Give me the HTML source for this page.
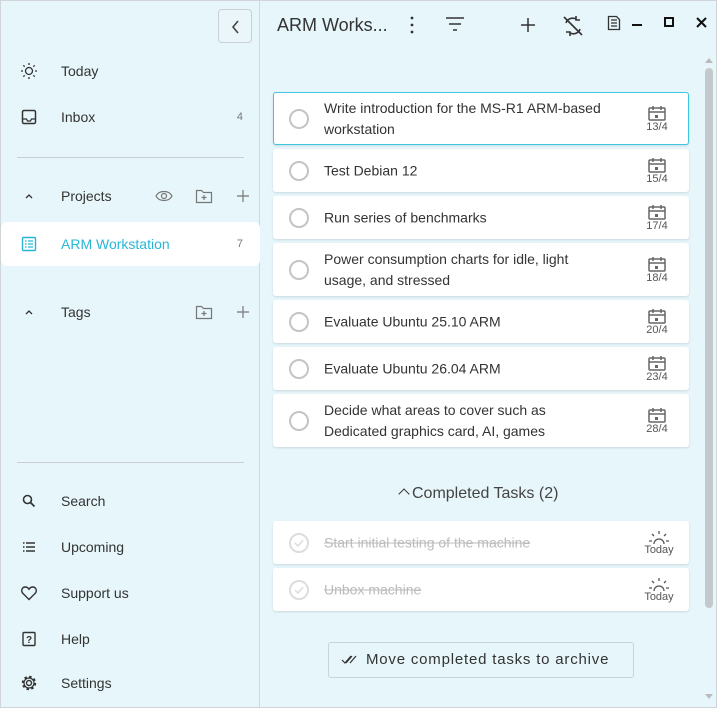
<!DOCTYPE html>
<html><head><meta charset="utf-8"><style>
*{box-sizing:border-box;margin:0;padding:0}
body{width:717px;height:708px;background:#e6f6fa;font-family:"Liberation Sans",sans-serif;color:#333;position:relative;overflow:hidden;font-size:14px}
.frame{position:absolute;inset:0;border:1px solid #d0d6d8}
.sb{position:absolute;left:0;top:0;width:260px;height:708px;border-right:1px solid #cfd8dc}
.nav{position:absolute;left:0;width:260px;height:40px;display:flex;align-items:center}
.nav .ic{position:absolute;left:20px;width:18px;height:18px}
.nav .t{position:absolute;left:61px;font-size:14px}
.nav .c{position:absolute;right:17px;font-size:11px;color:#777}
.hr{position:absolute;left:17px;width:227px;height:1px;background:#c9cfd1}
.card{position:absolute;left:273px;width:416px;background:#fff;border-radius:3px;box-shadow:0 1px 2px rgba(0,0,0,.12)}
.card .cb{position:absolute;left:16px;top:50%;margin-top:-10px;width:20px;height:20px;border:2px solid #c4c4c4;border-radius:50%}
.card .tx{position:absolute;left:51px;top:50%;transform:translateY(-50%);width:320px;line-height:21px;font-size:14px;color:#333;white-space:nowrap}
.card .dt{position:absolute;right:18px;top:50%;transform:translateY(-50%);width:28px;text-align:center;font-size:11px;color:#555}
.done .tx{color:#bbb;text-decoration:line-through}
svg{display:block}
</style></head><body>
<div class="sb">
 <div style="position:absolute;left:218px;top:9px;width:34px;height:34px;border:1px solid #c8d0d3;border-radius:4px;background:#eaf6f9"><svg width="34" height="34"><path d="M19 11l-5 6 5 6" fill="none" stroke="#444" stroke-width="1.6"/></svg></div>
 <div class="nav" style="top:51px"><svg class="ic" viewBox="0 0 18 18"><circle cx="9" cy="9" r="3.5" fill="none" stroke="#333" stroke-width="1.3"/><g stroke="#333" stroke-width="1.3"><path d="M9 1v2M9 15v2M1 9h2M15 9h2M3.3 3.3l1.4 1.4M13.3 13.3l1.4 1.4M3.3 14.7l1.4-1.4M13.3 4.7l1.4-1.4"/></g></svg><span class="t">Today</span></div>
 <div class="nav" style="top:97px"><svg class="ic" viewBox="0 0 18 18"><rect x="2.5" y="2.5" width="13" height="13" rx="1.5" fill="none" stroke="#333" stroke-width="1.5"/><path d="M2.5 11h4l1 2h3l1-2h4" fill="none" stroke="#333" stroke-width="1.3"/></svg><span class="t">Inbox</span><span class="c">4</span></div>
 <div class="hr" style="top:157px"></div>
 <div class="nav" style="top:176px"><svg class="ic" viewBox="0 0 18 18"><path d="M6 11l3-3 3 3" fill="none" stroke="#333" stroke-width="1.3"/></svg><span class="t">Projects</span>
  <svg style="position:absolute;left:155px" width="18" height="14" viewBox="0 0 18 14"><path d="M1 7c3-6 13-6 16 0c-3 6-13 6-16 0z" fill="none" stroke="#777" stroke-width="1.2"/><circle cx="9" cy="7" r="2.5" fill="none" stroke="#777" stroke-width="1.2"/></svg>
  <svg style="position:absolute;left:195px" width="18" height="16" viewBox="0 0 18 16"><path d="M1.5 2.5h5l2 2h8v10h-15z" fill="none" stroke="#777" stroke-width="1.2"/><path d="M9 7v5M6.5 9.5h5" stroke="#777" stroke-width="1.2"/></svg>
  <svg style="position:absolute;left:236px" width="14" height="14"><path d="M7 1v12M1 7h12" stroke="#777" stroke-width="1.2"/></svg></div>
 <div style="position:absolute;left:1px;top:222px;width:259px;height:44px;background:#fff;border-radius:6px"></div>
 <div class="nav" style="top:224px"><svg class="ic" viewBox="0 0 18 18"><rect x="2.5" y="2.5" width="13" height="13" rx="1" fill="none" stroke="#29b6d6" stroke-width="1.4"/><path d="M5 6h1.5M8 6h5M5 9h1.5M8 9h5M5 12h1.5M8 12h5" stroke="#29b6d6" stroke-width="1.2"/></svg><span class="t" style="color:#29b6d6">ARM Workstation</span><span class="c">7</span></div>
 <div class="nav" style="top:292px"><svg class="ic" viewBox="0 0 18 18"><path d="M6 11l3-3 3 3" fill="none" stroke="#333" stroke-width="1.3"/></svg><span class="t">Tags</span>
  <svg style="position:absolute;left:195px" width="18" height="16" viewBox="0 0 18 16"><path d="M1.5 2.5h5l2 2h8v10h-15z" fill="none" stroke="#777" stroke-width="1.2"/><path d="M9 7v5M6.5 9.5h5" stroke="#777" stroke-width="1.2"/></svg>
  <svg style="position:absolute;left:236px" width="14" height="14"><path d="M7 1v12M1 7h12" stroke="#777" stroke-width="1.2"/></svg></div>
 <div class="hr" style="top:462px"></div>
 <div class="nav" style="top:481px"><svg class="ic" viewBox="0 0 18 18"><circle cx="7.5" cy="7.5" r="4" fill="none" stroke="#333" stroke-width="1.6"/><path d="M10.5 10.5l4 4" stroke="#333" stroke-width="1.8"/></svg><span class="t">Search</span></div>
 <div class="nav" style="top:527px"><svg class="ic" viewBox="0 0 18 18"><path d="M3 5h1.5M6 5h9M3 9h1.5M6 9h9M3 13h1.5M6 13h9" stroke="#333" stroke-width="1.4"/></svg><span class="t">Upcoming</span></div>
 <div class="nav" style="top:573px"><svg class="ic" viewBox="0 0 18 18"><path d="M9 15.5L3 9.5C0.5 7 2 3 5.2 3c1.8 0 3 1 3.8 2.2C9.8 4 11 3 12.8 3 16 3 17.5 7 15 9.5z" fill="none" stroke="#333" stroke-width="1.4"/></svg><span class="t">Support us</span></div>
 <div class="nav" style="top:619px"><svg class="ic" viewBox="0 0 18 18"><rect x="3" y="2.5" width="12" height="13" rx="1" fill="none" stroke="#333" stroke-width="1.4"/><text x="9" y="13" font-size="10" text-anchor="middle" font-family="Liberation Sans" font-weight="bold" fill="#333">?</text></svg><span class="t">Help</span></div>
 <div class="nav" style="top:663px"><svg class="ic" viewBox="0 0 18 18"><circle cx="9" cy="9" r="2.5" fill="none" stroke="#333" stroke-width="1.4"/><circle cx="9" cy="9" r="6" fill="none" stroke="#333" stroke-width="2.4" stroke-dasharray="2.4 2.3"/><circle cx="9" cy="9" r="5" fill="none" stroke="#333" stroke-width="1.2"/></svg><span class="t">Settings</span></div>
</div>

<div style="position:absolute;left:277px;top:15px;font-size:18px;color:#333">ARM Works...</div>
<svg style="position:absolute;left:405px;top:15px" width="14" height="20"><circle cx="7" cy="3" r="1.4" fill="#333"/><circle cx="7" cy="10" r="1.4" fill="#333"/><circle cx="7" cy="17" r="1.4" fill="#333"/></svg>
<svg style="position:absolute;left:445px;top:16px" width="20" height="16"><path d="M1 2h18M4 8h12M8 14h4" stroke="#333" stroke-width="1.5"/></svg>
<svg style="position:absolute;left:521px;top:18px" width="14" height="14"><path d="M7 0v14M0 7h14" stroke="#333" stroke-width="1.5"/></svg>
<svg style="position:absolute;left:561px;top:14px" width="24" height="24" viewBox="0 0 24 24"><path d="M5 9c1-4 6-6 10-4M19 15c-1 4-6 6-10 4M15 2v4h4M9 22v-4H5M3 3l18 18" fill="none" stroke="#333" stroke-width="1.6"/></svg>
<svg style="position:absolute;left:607px;top:15px" width="14" height="16"><path d="M1.5 1.5h8l3 3v10h-11z" fill="none" stroke="#333" stroke-width="1.3"/><path d="M4 5h6M4 8h6M4 11h6" stroke="#333" stroke-width="1.2"/></svg>
<div style="position:absolute;left:632px;top:24px;width:10px;height:2px;background:#111"></div>
<div style="position:absolute;left:664px;top:17px;width:10px;height:10px;border:2px solid #111"></div>
<svg style="position:absolute;left:696px;top:17px" width="11" height="11"><path d="M1 1l9 9M10 1l-9 9" stroke="#111" stroke-width="2"/></svg>

<svg style="position:absolute;left:704px;top:57px" width="10" height="6"><path d="M1 6l4-5 4 5z" fill="#bbb"/></svg>
<div style="position:absolute;left:705px;top:68px;width:8px;height:540px;border-radius:4px;background:#c4c9cb"></div>
<svg style="position:absolute;left:704px;top:694px" width="10" height="6"><path d="M1 0l4 5 4-5z" fill="#bbb"/></svg>

<div class="card" style="top:92px;height:53px;border:1px solid #3fc6e0"><div class="cb" style="left:15px"></div><div class="tx" style="left:50px">Write introduction for the MS-R1 ARM-based<br>workstation</div><div class="dt" style="right:17px">CAL<br>13/4</div></div>
<div class="card" style="top:149px;height:43px"><div class="cb"></div><div class="tx">Test Debian 12</div><div class="dt">CAL<br>15/4</div></div>
<div class="card" style="top:196px;height:43px"><div class="cb"></div><div class="tx">Run series of benchmarks</div><div class="dt">CAL<br>17/4</div></div>
<div class="card" style="top:243px;height:53px"><div class="cb"></div><div class="tx">Power consumption charts for idle, light<br>usage, and stressed</div><div class="dt">CAL<br>18/4</div></div>
<div class="card" style="top:300px;height:43px"><div class="cb"></div><div class="tx">Evaluate Ubuntu 25.10 ARM</div><div class="dt">CAL<br>20/4</div></div>
<div class="card" style="top:347px;height:43px"><div class="cb"></div><div class="tx">Evaluate Ubuntu 26.04 ARM</div><div class="dt">CAL<br>23/4</div></div>
<div class="card" style="top:394px;height:53px"><div class="cb"></div><div class="tx">Decide what areas to cover such as<br>Dedicated graphics card, AI, games</div><div class="dt">CAL<br>28/4</div></div>

<div style="position:absolute;left:398px;top:485px;font-size:16px;color:#444"><span style="display:inline-block;width:8px;height:8px;border-left:1.6px solid #333;border-top:1.6px solid #333;transform:rotate(45deg);margin:0 4px 0 2px;position:relative;top:0px"></span>Completed Tasks (2)</div>

<div class="card done" style="top:521px;height:43px"><div class="cb" style="border-color:#ddd"><svg width="16" height="16" style="margin:0"><path d="M4 8l3 3 5-6" fill="none" stroke="#ddd" stroke-width="1.5"/></svg></div><div class="tx">Start initial testing of the machine</div><div class="dt" style="width:36px;right:12px">SUN<br>Today</div></div>
<div class="card done" style="top:568px;height:43px"><div class="cb" style="border-color:#ddd"><svg width="16" height="16"><path d="M4 8l3 3 5-6" fill="none" stroke="#ddd" stroke-width="1.5"/></svg></div><div class="tx">Unbox machine</div><div class="dt" style="width:36px;right:12px">SUN<br>Today</div></div>

<div style="position:absolute;left:328px;top:642px;width:306px;height:36px;border:1px solid #c7d3d8;border-radius:3px;background:#e6f6fa;font-size:15px;letter-spacing:.8px;color:#333;padding-left:37px;line-height:34px">Move completed tasks to archive
<svg style="position:absolute;left:12px;top:12px" width="16" height="10"><path d="M1 5l3 3 6-7M5 8l6-7M9 8l6-7" fill="none" stroke="#333" stroke-width="1.2"/></svg></div>
<div class="frame"></div>
<script>
document.querySelectorAll('.dt').forEach(d=>{
 const h=d.innerHTML;
 if(h.startsWith('CAL'))d.innerHTML='<svg width="20" height="16" style="margin:0 auto"><rect x="2" y="3" width="16" height="12" rx="1" fill="none" stroke="#666" stroke-width="1.5"/><path d="M2 7h16M6 1v4M14 1v4" stroke="#666" stroke-width="1.5"/><rect x="8" y="10" width="3" height="3" fill="#666"/></svg>'+h.slice(7);
 else d.innerHTML='<svg width="24" height="14" style="margin:0 auto"><path d="M7 14a5 5 0 0 1 10 0" fill="none" stroke="#555" stroke-width="1.3"/><path d="M12 1v3M5 4l2 2M19 4l-2 2M2 11h3M19 11h3" stroke="#555" stroke-width="1.3"/></svg>'+h.slice(7);
});
</script>
</body></html>
